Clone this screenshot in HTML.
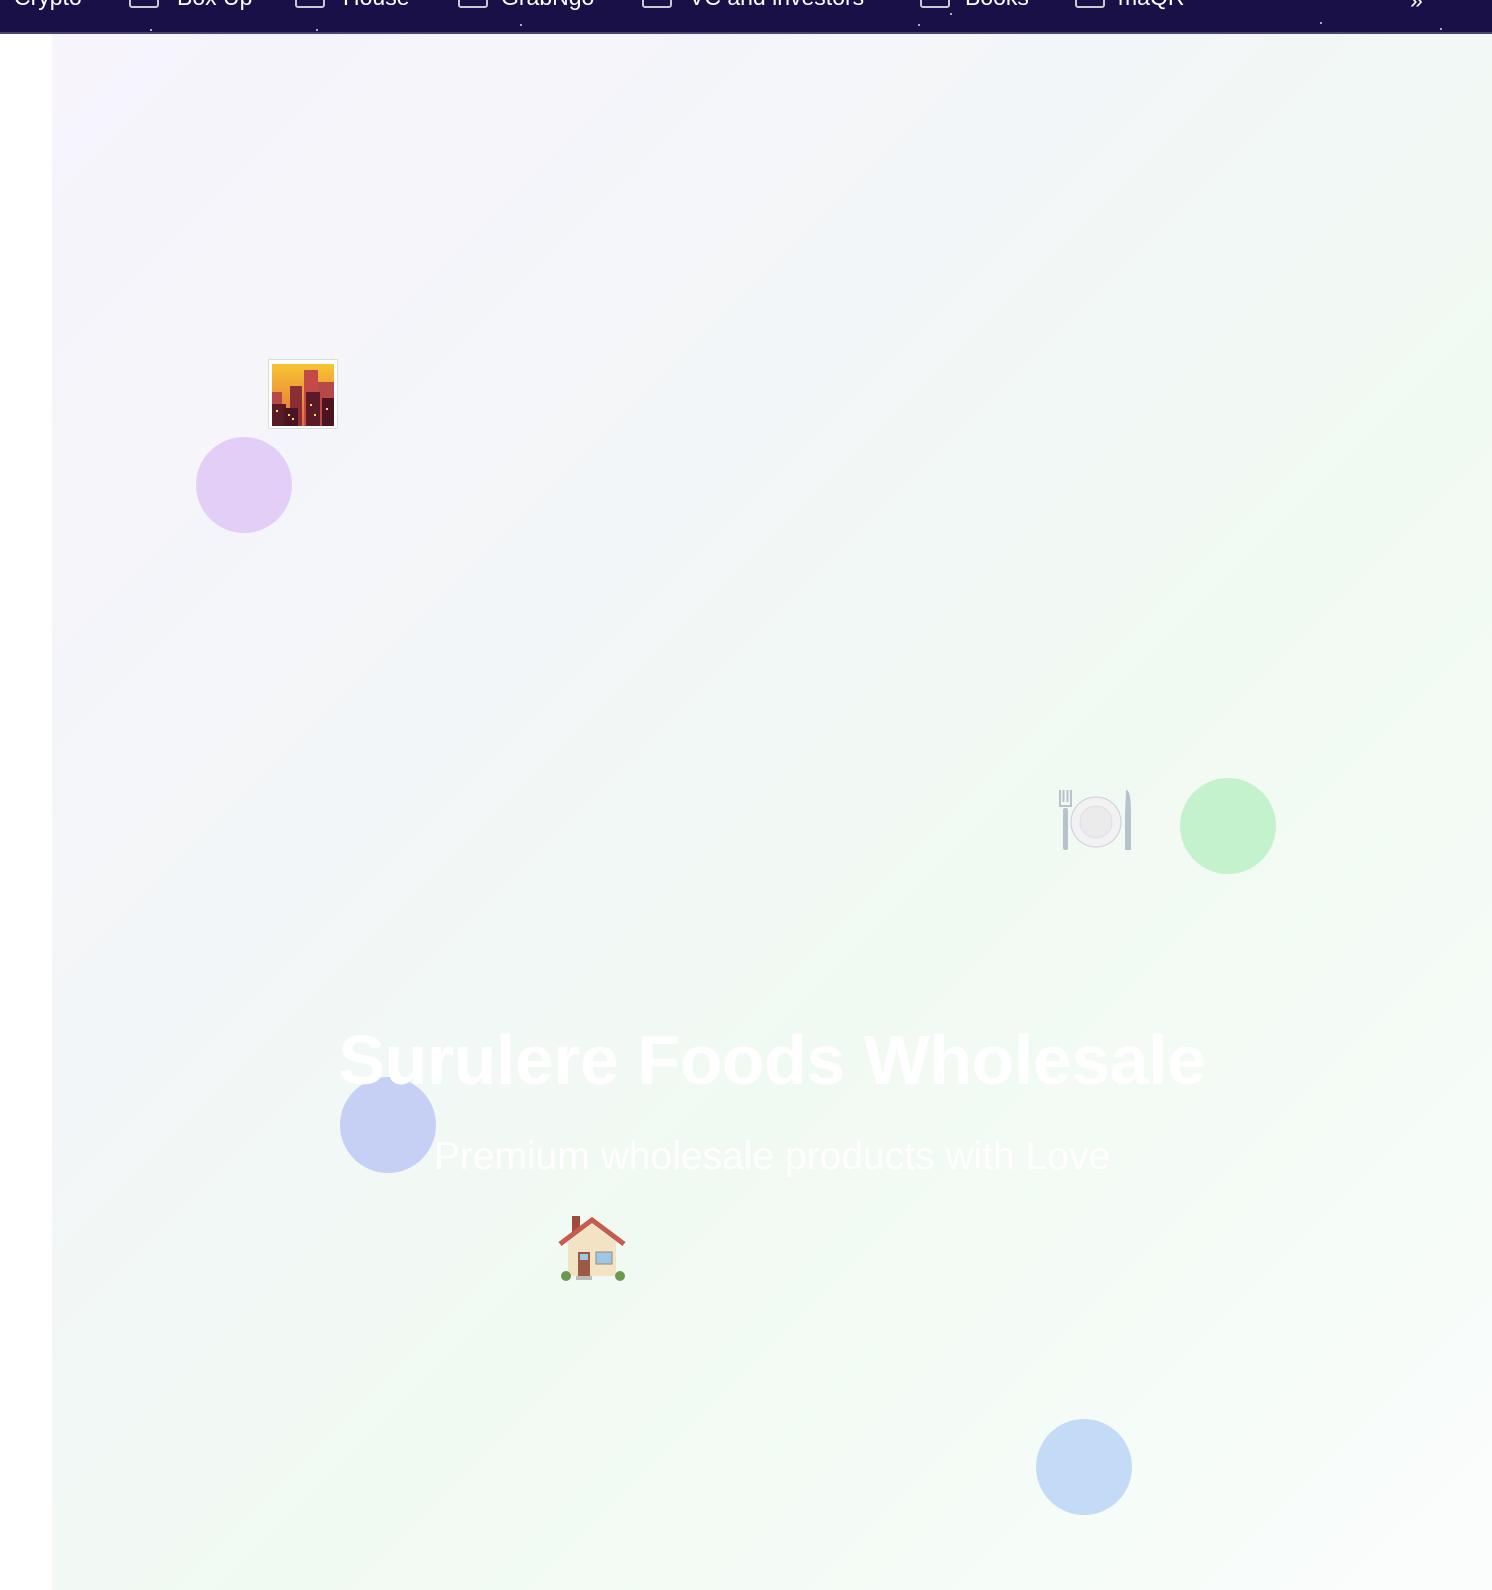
<!DOCTYPE html>
<html><head><meta charset="utf-8"><style>
html,body{margin:0;padding:0;width:1492px;height:1590px;overflow:hidden;background:#fff;font-family:"Liberation Sans",sans-serif;}
.bar{position:absolute;left:0;top:0;width:1492px;height:32px;background:#1a1048;border-bottom:2px solid #4a4670;overflow:hidden}
.bar span{position:absolute;top:-15px;color:#fff;font-size:23px;line-height:24px;white-space:nowrap}
.fold{position:absolute;top:-14px;width:30px;height:22px;border:2px solid #c9c9d2;border-radius:3px;box-sizing:border-box}
.star{position:absolute;width:2px;height:2px;background:#aab;}
.main{position:absolute;left:52px;top:34px;width:1440px;height:1556px;background:linear-gradient(135deg,#f7f4fc 0%,#f3f6f8 35%,#f1faf2 60%,#f6fcf8 85%,#fbfdfc 100%)}
.c{position:absolute;border-radius:50%}
h1{position:absolute;left:0;width:1544px;top:1020px;margin:0;text-align:center;color:#fff;font-size:70px;font-weight:bold;letter-spacing:-0.5px}
p.sub{position:absolute;left:0;width:1544px;top:1135px;margin:0;text-align:center;color:#fff;font-size:39px;font-weight:300}
</style></head><body>
<div class="bar">
<span style="left:14px">Crypto</span>
<div class="fold" style="left:129px"></div><span style="left:177px">Box Up</span>
<div class="fold" style="left:295px"></div><span style="left:343px">House</span>
<div class="fold" style="left:458px"></div><span style="left:501px">GrabNgo</span>
<div class="fold" style="left:642px"></div><span style="left:689px">VC and investors</span>
<div class="fold" style="left:920px"></div><span style="left:965px">Books</span>
<div class="fold" style="left:1075px"></div><span style="left:1118px">maQR</span>
<span style="left:1410px;top:-12px">»</span>
<div class="star" style="left:150px;top:29px"></div><div class="star" style="left:316px;top:29px"></div>
<div class="star" style="left:520px;top:24px"></div><div class="star" style="left:918px;top:24px"></div>
<div class="star" style="left:950px;top:13px"></div><div class="star" style="left:1320px;top:22px"></div>
<div class="star" style="left:1440px;top:28px"></div>
</div>
<div class="main"></div>
<div style="position:absolute;left:268px;top:359px;width:70px;height:70px;background:#fff;border:1px solid #ddd;box-sizing:border-box">
<svg width="62" height="62" style="position:absolute;left:3px;top:4px" viewBox="0 0 62 62">
<defs><linearGradient id="g" x1="0" y1="0" x2="0" y2="1"><stop offset="0" stop-color="#f7c531"/><stop offset="1" stop-color="#e66a3c"/></linearGradient></defs>
<rect width="62" height="62" fill="url(#g)"/>
<rect x="32" y="6" width="14" height="56" fill="#c44a4a"/><rect x="46" y="18" width="16" height="44" fill="#b84848"/>
<rect x="18" y="22" width="12" height="40" fill="#8a2e36"/><rect x="0" y="28" width="10" height="34" fill="#b84848"/>
<rect x="0" y="40" width="14" height="22" fill="#5a1a26"/><rect x="12" y="44" width="14" height="18" fill="#4a1520"/>
<rect x="34" y="28" width="14" height="34" fill="#5a1a26"/><rect x="50" y="34" width="12" height="28" fill="#4a1520"/>
<g fill="#f8e060"><rect x="16" y="50" width="2" height="2"/><rect x="20" y="54" width="2" height="2"/><rect x="38" y="40" width="2" height="2"/><rect x="42" y="50" width="2" height="2"/><rect x="54" y="44" width="2" height="2"/><rect x="4" y="46" width="2" height="2"/></g>
</svg></div>
<div class="c" style="left:196px;top:437px;width:96px;height:96px;background:#e2cef7"></div>
<svg style="position:absolute;left:1058px;top:788px" width="76" height="66" viewBox="0 0 76 66">
<rect x="5" y="20" width="5" height="42" rx="2" fill="#b8c2cc"/><path d="M2 2v16h11V2M5.5 2v12M9.5 2v12" stroke="#b8c2cc" stroke-width="2" fill="none"/>
<circle cx="38" cy="34" r="25" fill="#f2f2f2" stroke="#ccd" stroke-width="1"/><circle cx="38" cy="34" r="16" fill="#ebebeb" stroke="#dde" stroke-width="1"/>
<path d="M68 2c4 0 5 10 5 24v36h-6V26z" fill="#b8c2cc"/></svg>
<div class="c" style="left:1180px;top:778px;width:96px;height:96px;background:#c3f2cc"></div>
<div class="c" style="left:340px;top:1077px;width:96px;height:96px;background:#c6d0f5"></div>
<div class="c" style="left:1036px;top:1419px;width:96px;height:96px;background:#c4dbf8"></div>
<svg style="position:absolute;left:558px;top:1212px" width="68" height="72" viewBox="0 0 68 72">
<rect x="14" y="4" width="8" height="16" fill="#a04a3c"/>
<path d="M10 30L34 12 58 30V64H10z" fill="#f1e3c4"/>
<path d="M2 32L34 8 66 32" stroke="#c85a4e" stroke-width="5" fill="none"/>
<rect x="20" y="40" width="12" height="24" fill="#9a5a46"/><rect x="22" y="42" width="8" height="6" fill="#9cc8e6"/>
<rect x="38" y="40" width="16" height="12" fill="#9cc8e6" stroke="#a08a70"/>
<circle cx="8" cy="64" r="5" fill="#6a9a4e"/><circle cx="62" cy="64" r="5" fill="#6a9a4e"/>
<rect x="18" y="64" width="16" height="4" fill="#bbb"/></svg>
<h1>Surulere Foods Wholesale</h1>
<p class="sub">Premium wholesale products with Love</p>
</body></html>
